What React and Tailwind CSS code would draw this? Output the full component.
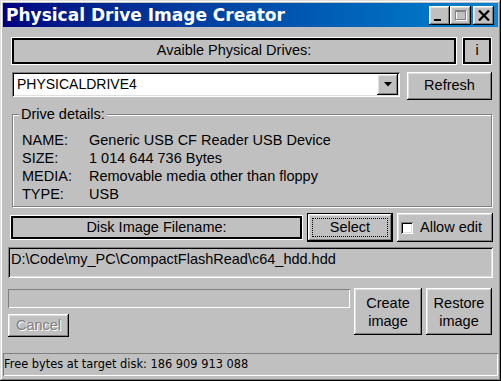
import React from 'react';

// ===== BEVELS (classic Windows look) =====
const raised = 'shadow-[inset_-1px_-1px_#000,inset_1px_1px_#fff,inset_-2px_-2px_#808080,inset_2px_2px_#dfdfdf]';
const sunken = 'shadow-[inset_1px_1px_#808080,inset_-1px_-1px_#fff,inset_2px_2px_#000,inset_-2px_-2px_#dfdfdf]';
const staticEdge = 'shadow-[inset_1px_1px_#808080,inset_-1px_-1px_#fff]';
const framed = 'border-2 border-black shadow-[0_0_0_1px_#fff]';

// ===== TITLE BAR BUTTON =====
const CaptionButton = ({ children, className = '' }) => (
  <div className={`w-[21px] h-[19px] bg-[#c0c0c0] flex items-center justify-center ${raised} ${className}`}>
    {children}
  </div>
);

// ===== PUSH BUTTON =====
const Button = ({ children, className = '' }) => (
  <div className={`bg-[#c0c0c0] flex items-center justify-center text-center ${raised} ${className}`}>
    {children}
  </div>
);

const DetailRow = ({ label, value }) => (
  <div className="flex h-[18px] leading-[18px]">
    <span className="w-[67px]">{label}</span>
    <span>{value}</span>
  </div>
);

export default function App() {
  return (
    <div className="w-[501px] h-[381px] bg-[#c0c0c0] p-[3px] flex flex-col text-[14.5px] text-black font-['Liberation_Sans',Arial,sans-serif] shadow-[inset_-1px_-1px_#000,inset_1px_1px_#dfdfdf,inset_-2px_-2px_#808080,inset_2px_2px_#fff] overflow-hidden">
      {/* title bar */}
      <div className="h-[24px] flex items-center bg-gradient-to-r from-[#000080] to-[#1084d0] pl-[3px] pr-[4px]">
        <span className="flex-1 text-white font-bold text-[17px] leading-none font-['DejaVu_Sans',Verdana,sans-serif]">
          Physical Drive Image Creator
        </span>
        <CaptionButton>
          <svg width="9" height="9" viewBox="0 0 9 9" className="mt-[5px] -ml-[3px]"><rect x="0" y="6" width="7" height="2" fill="#000" /></svg>
        </CaptionButton>
        <CaptionButton>
          <svg width="12" height="11" viewBox="0 0 12 11">
            <rect x="1.5" y="1.5" width="10" height="9" fill="none" stroke="#fff" />
            <rect x="0.5" y="0.5" width="10" height="9" fill="none" stroke="#808080" />
            <line x1="1" y1="1.5" x2="10" y2="1.5" stroke="#808080" />
          </svg>
        </CaptionButton>
        <CaptionButton className="ml-[2px]">
          <svg width="12" height="11" viewBox="0 0 12 11">
            <path d="M1 0.5 L11 10.5 M11 0.5 L1 10.5" stroke="#000" strokeWidth="2.2" />
          </svg>
        </CaptionButton>
      </div>

      {/* drives header */}
      <div className="flex mt-[11px] ml-[9px] h-[26px]">
        <div className={`w-[444px] flex items-center justify-center ${framed}`}>Avaible Physical Drives:</div>
        <div className={`w-[28px] ml-[7px] flex items-center justify-center ${framed}`}>i</div>
      </div>

      {/* drive selector */}
      <div className="flex items-start mt-[8px] ml-[9px]">
        <div className={`w-[388px] h-[25px] bg-white flex items-center pl-[5px] pr-[2px] text-[14px] ${sunken}`}>
          <span className="flex-1">PHYSICALDRIVE4</span>
          <Button className="w-[21px] h-[21px]">
            <svg width="8" height="5" viewBox="0 0 8 5"><path d="M0 0 H8 L4 4.5 Z" fill="#000" /></svg>
          </Button>
        </div>
        <Button className="w-[85px] h-[28px] ml-[7px]">Refresh</Button>
      </div>

      {/* drive details group */}
      <div className="relative mt-[14px] ml-[9px] w-[480px] h-[93px] border border-[#808080] shadow-[1px_1px_#fff,inset_1px_1px_#fff] pt-[16px] pl-[9px]">
        <span className="absolute -top-[10px] left-[6px] px-[2px] bg-[#c0c0c0] leading-[18px]">Drive details:</span>
        <DetailRow label="NAME:" value="Generic USB CF Reader USB Device" />
        <DetailRow label="SIZE:" value="1 014 644 736 Bytes" />
        <DetailRow label="MEDIA:" value="Removable media other than floppy" />
        <DetailRow label="TYPE:" value="USB" />
      </div>

      {/* filename row */}
      <div className="flex items-center mt-[6px] ml-[8px] h-[29px]">
        <div className={`w-[291px] h-[23px] flex items-center justify-center ${framed}`}>Disk Image Filename:</div>
        <div className="w-[86px] h-[29px] ml-[5px] border border-black">
          <Button className="w-full h-full">
            <div className="w-[76px] h-[19px] border border-dotted border-black flex items-center justify-center">Select</div>
          </Button>
        </div>
        <div className={`w-[96px] h-[29px] ml-[4px] flex items-center pl-[4px] ${raised}`}>
          <div className={`w-[12px] h-[12px] bg-white ${sunken}`} />
          <span className="ml-[7px]">Allow edit</span>
        </div>
      </div>

      {/* path */}
      <div className={`mt-[5px] ml-[5px] w-[485px] h-[31px] pl-[3px] pt-[3px] leading-[18px] ${sunken}`}>
        D:\Code\my_PC\CompactFlashRead\c64_hdd.hdd
      </div>

      {/* progress + actions */}
      <div className="flex mt-[10px] ml-[5px]">
        <div className="flex flex-col w-[342px]">
          <div className={`h-[19px] mt-[1px] ${staticEdge}`} />
          <Button className="w-[61px] h-[23px] mt-[6px] text-[#808080] [text-shadow:1px_1px_#fff]">Cancel</Button>
        </div>
        <Button className="w-[68px] h-[47px] ml-[4px] leading-[18px] flex-col">
          <span>Create</span>
          <span>image</span>
        </Button>
        <Button className="w-[66px] h-[47px] ml-[4px] leading-[18px] flex-col">
          <span>Restore</span>
          <span>image</span>
        </Button>
      </div>

      {/* status bar */}
      <div className={`mt-auto mb-[2px] h-[23px] flex items-center pl-[1px] text-[11.4px] font-['DejaVu_Sans',Verdana,sans-serif] ${staticEdge}`}>
        Free bytes at target disk: 186 909 913 088
      </div>
    </div>
  );
}
